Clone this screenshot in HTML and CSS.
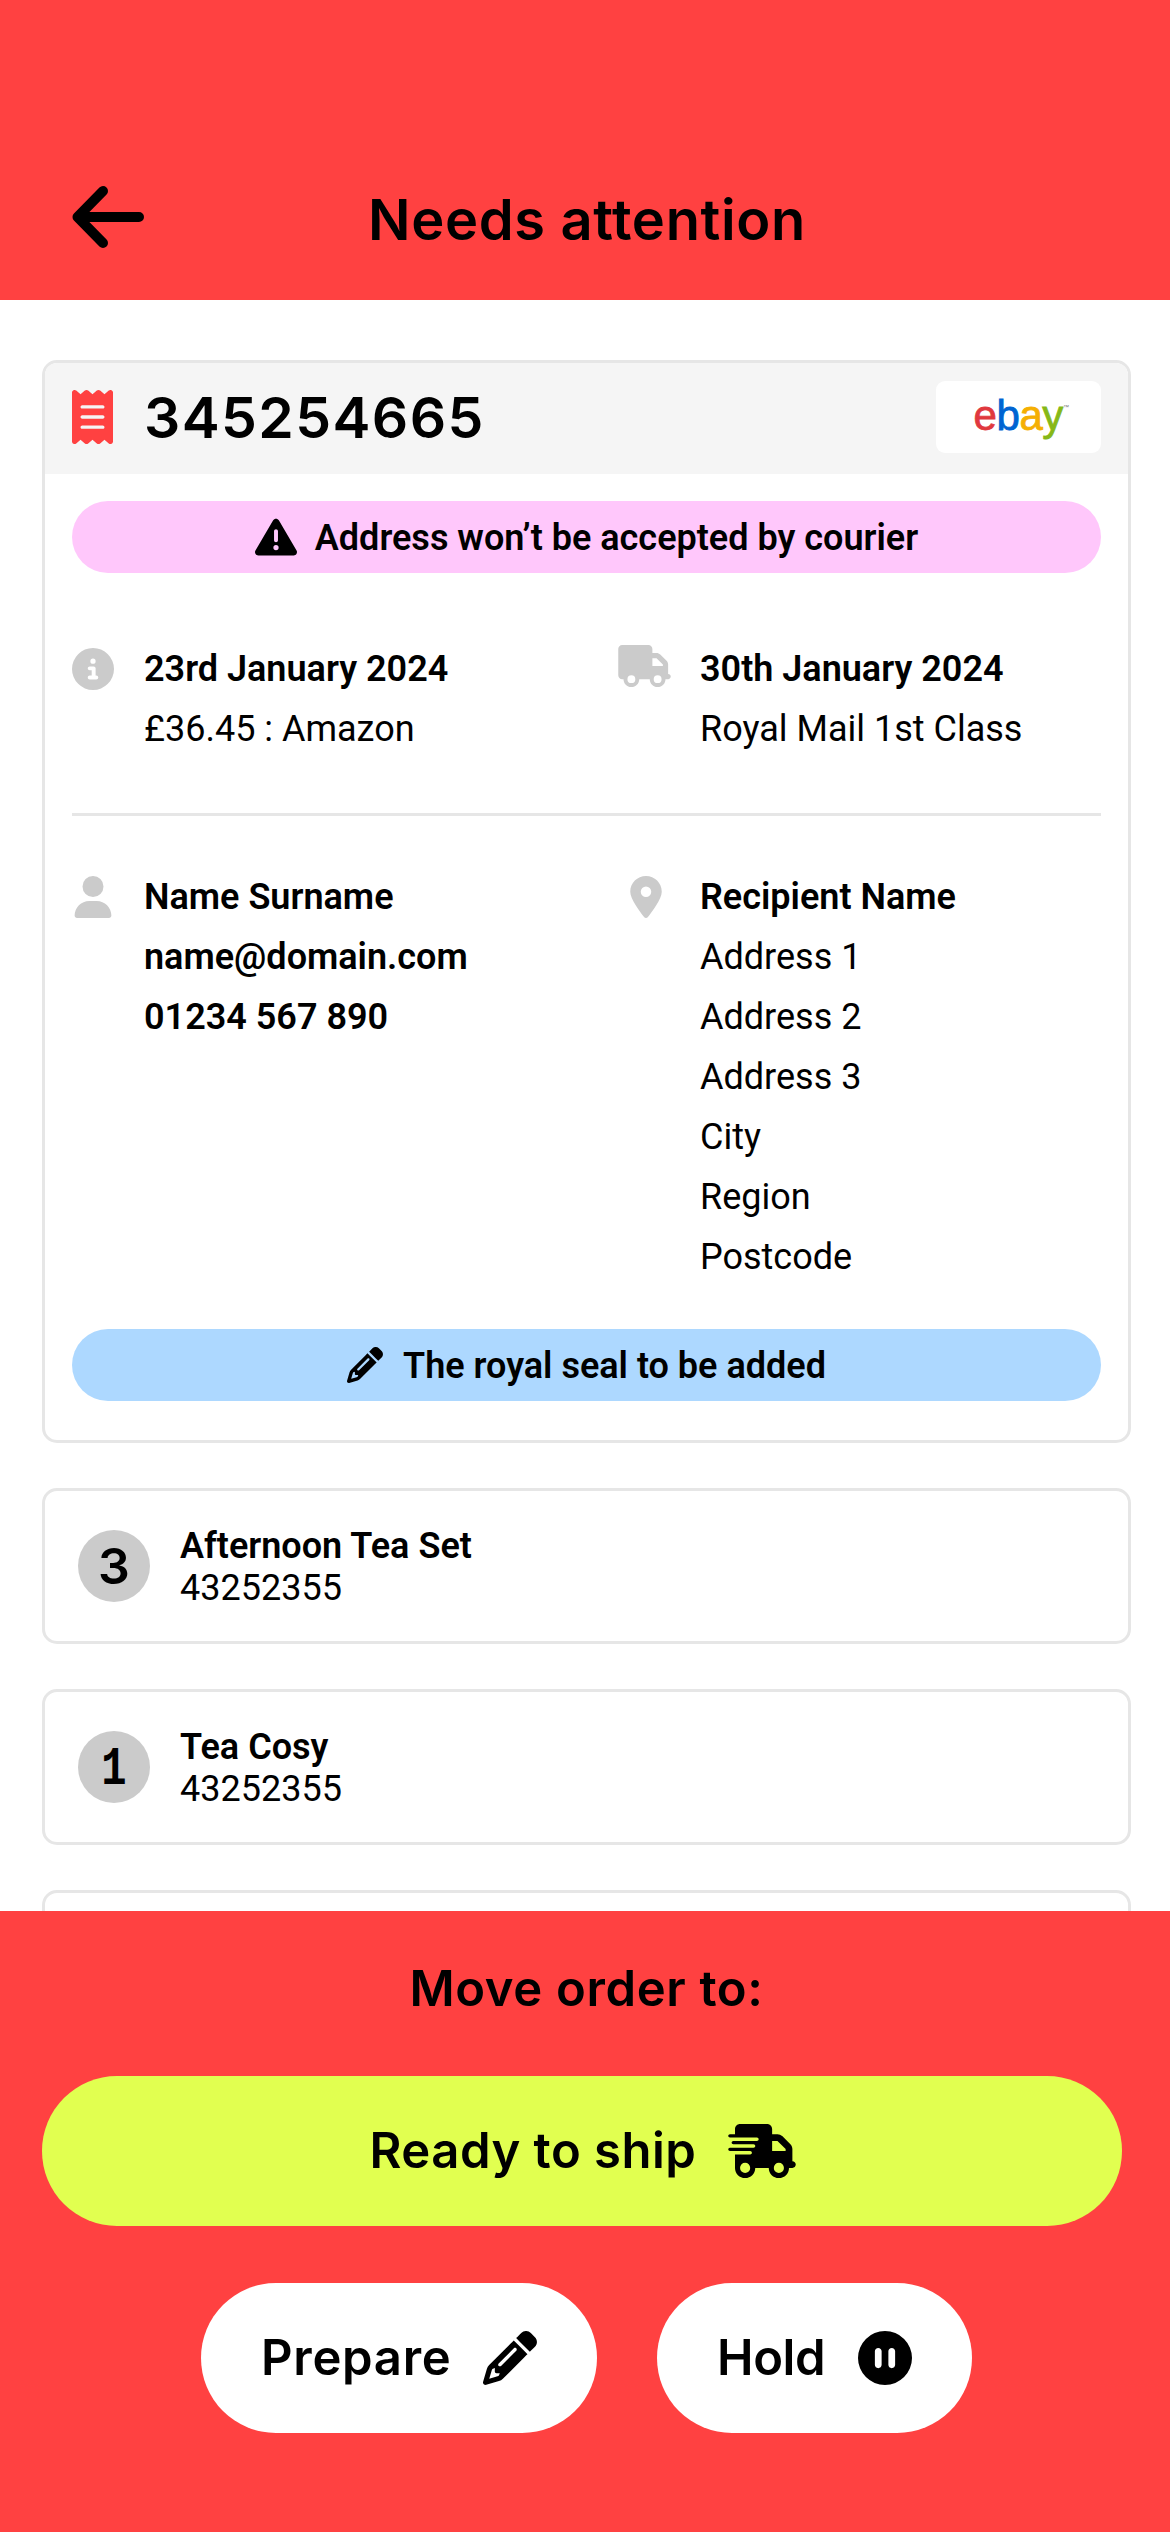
FILE: index.html
```html
<!DOCTYPE html>
<html lang="en">
<head>
<meta charset="utf-8">
<title>Needs attention</title>
<link rel="stylesheet" href="styles.css">
</head>
<body>
<svg class="defs" aria-hidden="true">
  <symbol id="pencil" viewBox="0 0 512 512"><path d="M410.300 231l11.300-11.300-33.900-33.900-62.100-62.100L291.700 89.800l-11.300 11.300-22.600 22.600L58.600 322.900c-10.400 10.400-18 23.300-22.200 37.400L1 480.700c-2.500 8.400-.2 17.500 6.100 23.700s15.300 8.500 23.700 6.100l120.300-35.400c14.100-4.200 27-11.800 37.400-22.200L387.700 253.700 410.300 231zM160 399.400l-9.100 22.700c-4 3.100-8.500 5.400-13.300 6.900L59.400 452l23-78.100c1.400-4.900 3.800-9.400 6.900-13.300l22.700-9.100v32c0 8.800 7.200 16 16 16h32zM362.700 18.700L348.300 33.200 325.700 55.800 314.300 67.100l33.900 33.900 62.100 62.100 33.900 33.900 11.300-11.300 22.600-22.600 14.500-14.500c25-25 25-65.500 0-90.500L453.300 18.700c-25-25-65.500-25-90.500 0zm-47.400 168l-144 144c-6.200 6.200-16.400 6.200-22.600 0s-6.200-16.400 0-22.600l144-144c6.200-6.200 16.400-6.200 22.600 0s6.200 16.400 0 22.600z"/></symbol>
</svg>
<div class="screen">
  <header class="topbar">
    <svg class="back" viewBox="0 0 72 64"><path d="M67 32H6M31 6 5.500 32 31 58" fill="none" stroke="#000" stroke-width="10" stroke-linecap="round" stroke-linejoin="round"/></svg>
    <h1 class="title">Needs attention</h1>
  </header>

  <main class="content">
    <section class="order">
      <div class="order-head">
        <svg class="receipt" viewBox="0 0 384 512" preserveAspectRatio="none"><path d="M14 2.200C22.500-1.700 32.500-.3 39.600 5.800L80 40.400 120.400 5.800c9-7.700 22.300-7.700 31.200 0L192 40.400 232.400 5.800c9-7.700 22.300-7.700 31.200 0L304 40.400 344.400 5.800c7.100-6.100 17.100-7.500 25.600-3.600s14 12.400 14 21.800V488c0 9.400-5.500 17.900-14 21.800s-18.500 2.500-25.600-3.600L304 471.600l-40.400 34.600c-9 7.700-22.300 7.700-31.200 0L192 471.600l-40.400 34.600c-9 7.700-22.300 7.700-31.200 0L80 471.600 39.600 506.200c-7.100 6.100-17.100 7.500-25.600 3.600S0 497.400 0 488V24C0 14.600 5.500 6.100 14 2.200zM96 144c-8.800 0-16 7.200-16 16s7.200 16 16 16h192c8.800 0 16-7.200 16-16s-7.200-16-16-16H96zM80 352c0 8.800 7.200 16 16 16h192c8.800 0 16-7.200 16-16s-7.200-16-16-16H96c-8.800 0-16 7.200-16 16zM96 240c-8.800 0-16 7.200-16 16s7.200 16 16 16h192c8.800 0 16-7.200 16-16s-7.200-16-16-16H96z"/></svg>
        <h2 class="order-no">345254665</h2>
        <div class="market"><span class="e">e</span><span class="b">b</span><span class="a">a</span><span class="y">y</span><span class="tm">™</span></div>
      </div>
      <div class="banner pink">
        <svg class="warn" viewBox="0 0 512 512"><path d="M256 32c14.200 0 27.300 7.500 34.500 19.800l216 368c7.300 12.400 7.300 27.700.2 40.100S486.300 480 472 480H40c-14.300 0-27.600-7.700-34.700-20.100s-7-27.800.2-40.100l216-368C228.700 39.500 241.800 32 256 32zm0 128c-13.300 0-24 10.700-24 24v112c0 13.300 10.700 24 24 24s24-10.700 24-24V184c0-13.300-10.700-24-24-24zm32 224a32 32 0 1 0-64 0 32 32 0 1 0 64 0z"/></svg>
        <span class="note-text">Address won’t be accepted by courier</span>
      </div>
      <div class="grid first">
        <div class="cell">
          <svg class="ic" viewBox="0 0 512 512"><path d="M256 512A256 256 0 1 0 256 0a256 256 0 1 0 0 512zM216 336h24V272H216c-13.300 0-24-10.700-24-24s10.700-24 24-24h48c13.300 0 24 10.700 24 24v88h8c13.300 0 24 10.700 24 24s-10.700 24-24 24H216c-13.300 0-24-10.700-24-24s10.700-24 24-24zm40-208a32 32 0 1 1 0 64 32 32 0 1 1 0-64z"/></svg>
          <div><p class="strong">23rd January 2024</p><p>£36.45 : Amazon</p></div>
        </div>
        <div class="cell">
          <svg class="ic truck" viewBox="0 0 640 512"><path d="M48 0C21.500 0 0 21.500 0 48V368c0 26.500 21.500 48 48 48H64c0 53 43 96 96 96s96-43 96-96H384c0 53 43 96 96 96s96-43 96-96h32c17.700 0 32-14.300 32-32s-14.300-32-32-32V237.300c0-17-6.700-33.300-18.700-45.300L512 114.700c-12-12-28.300-18.700-45.300-18.700H416V48c0-26.500-21.500-48-48-48H48zM416 160h50.700L544 237.300V256H416V160zM112 416a48 48 0 1 1 96 0 48 48 0 1 1-96 0zm368-48a48 48 0 1 1 0 96 48 48 0 1 1 0-96z"/></svg>
          <div><p class="strong">30th January 2024</p><p>Royal Mail 1st Class</p></div>
        </div>
      </div>
      <div class="grid second">
        <div class="cell">
          <svg class="ic" viewBox="-32 0 512 512"><path d="M224 256A128 128 0 1 0 224 0a128 128 0 1 0 0 256zm-45.700 48C79.800 304 0 383.800 0 482.300 0 498.700 13.300 512 29.700 512H418.300c16.400 0 29.700-13.300 29.700-29.700C448 383.800 368.200 304 269.700 304H178.300z"/></svg>
          <div class="strong"><p>Name Surname</p><p>name@domain.com</p><p>01234 567 890</p></div>
        </div>
        <div class="cell">
          <svg class="ic pin" viewBox="0 0 384 512"><path d="M215.700 499.200C267 435 384 279.400 384 192 384 86 298 0 192 0S0 86 0 192c0 87.400 117 243 168.300 307.200 12.300 15.300 35.100 15.300 47.400 0zM192 128a64 64 0 1 1 0 128 64 64 0 1 1 0-128z"/></svg>
          <div><p class="strong">Recipient Name</p><p>Address 1</p><p>Address 2</p><p>Address 3</p><p>City</p><p>Region</p><p>Postcode</p></div>
        </div>
      </div>
      <div class="banner blue">
        <svg class="note" viewBox="0 0 512 512"><use href="#pencil"/></svg>
        <span class="note-text">The royal seal to be added</span>
      </div>
    </section>

    <section class="item"><span class="qty">3</span><div><p class="strong">Afternoon Tea Set</p><p>43252355</p></div></section>
    <section class="item"><span class="qty"><span class="one">1</span></span><div><p class="strong">Tea Cosy</p><p>43252355</p></div></section>
    <section class="item"></section>
  </main>

  <footer class="actions">
    <h3 class="move">Move order to:</h3>
    <button class="btn ready"><span>Ready to ship</span>
      <svg class="fast" viewBox="0 0 640 512"><path d="M112 0C85.500 0 64 21.500 64 48V96H16c-8.800 0-16 7.200-16 16s7.200 16 16 16H272c8.800 0 16 7.200 16 16s-7.200 16-16 16H48c-8.800 0-16 7.200-16 16s7.200 16 16 16H240c8.800 0 16 7.200 16 16s-7.200 16-16 16H16c-8.800 0-16 7.200-16 16s7.200 16 16 16H208c8.800 0 16 7.200 16 16s-7.200 16-16 16H64V416c0 53 43 96 96 96s96-43 96-96H384c0 53 43 96 96 96s96-43 96-96h32c17.700 0 32-14.300 32-32s-14.300-32-32-32V237.300c0-17-6.700-33.300-18.700-45.300L512 114.700c-12-12-28.300-18.700-45.300-18.700H416V48c0-26.500-21.500-48-48-48H112zM544 237.300V256H416V160h50.700L544 237.300zM160 368a48 48 0 1 1 0 96 48 48 0 1 1 0-96zm272 48a48 48 0 1 1 96 0 48 48 0 1 1-96 0z"/></svg>
    </button>
    <div class="pair">
      <button class="btn prepare"><span>Prepare</span><svg class="sq" viewBox="0 0 512 512"><use href="#pencil"/></svg></button>
      <button class="btn hold"><span>Hold</span><svg class="sq" viewBox="0 0 512 512"><path d="M256 512A256 256 0 1 0 256 0a256 256 0 1 0 0 512zM224 192V320c0 17.700-14.300 32-32 32s-32-14.300-32-32V192c0-17.700 14.300-32 32-32s32 14.300 32 32zm128 0V320c0 17.700-14.300 32-32 32s-32-14.300-32-32V192c0-17.700 14.300-32 32-32s32 14.300 32 32z"/></svg></button>
    </div>
  </footer>
</div>
</body>
</html>
```
FILE: styles.css
```css
* { box-sizing: border-box; margin: 0; padding: 0; }
body { background: #fff; color: #000; font: 400 36px/60px Roboto, "Liberation Sans", sans-serif; }
svg { display: block; flex: none; }
.defs { display: none; }
.screen { width: 1170px; height: 2532px; display: flex; flex-direction: column; overflow: hidden; }
.strong { font-weight: 600; }

.topbar { flex: none; height: 300px; background: #ff4141; display: grid; grid-template-columns: 72px 1fr 72px; align-items: center; padding: 134px 72px 0; }
.back { width: 72px; height: 64px; }
.title { font: 600 56px/72px Inter, sans-serif; letter-spacing: 0.65px; text-align: center; white-space: nowrap; padding: 5px 0 0 4px; }

.content { flex: 1; min-height: 0; overflow: hidden; padding: 60px 39px 0 42px; display: flex; flex-direction: column; gap: 45px; }
.order { flex: none; height: 1083px; border: 3px solid #e6e6e6; border-radius: 15px; overflow: hidden; }
.order-head { height: 111px; background: #f5f5f5; display: flex; align-items: center; padding: 0 27px 3px; }
.receipt { width: 41px; height: 54px; fill: #ff4141; }
.order-no { margin-left: 31px; padding-top: 2px; font: 600 57px/72px Inter, sans-serif; letter-spacing: 1.4px; }
.market { margin-left: auto; width: 165px; height: 72px; border-radius: 9px; background: #fff; display: flex; justify-content: center; padding-left: 5px; font: 400 42px/69px "Liberation Sans", sans-serif; letter-spacing: -0.4px; -webkit-text-stroke: 0.8px; }
.e { color: #e0383e; } .b { color: #0064d2; } .a { color: #f5af02; } .y { color: #86b817; }
.tm { font-size: 6px; line-height: 52px; color: #777; -webkit-text-stroke: 0; }

.banner { height: 72px; margin: 0 27px; border-radius: 36px; display: flex; align-items: center; justify-content: center; font-weight: 600; white-space: nowrap; }
.pink { background: #ffc7fb; margin-top: 27px; gap: 18px; }
.blue { background: #add8ff; gap: 20px; }
.note-text { padding-top: 2px; }
.warn { width: 42px; height: 42px; }
.note { width: 36px; height: 36px; }
.grid { margin: 0 27px; display: grid; grid-template-columns: 546px 1fr; }
.first { padding: 66px 0 54px; border-bottom: 3px solid #e6e6e6; }
.second { padding: 51px 0 42px; }
.cell { display: grid; grid-template-columns: 42px 1fr; column-gap: 30px; white-space: nowrap; }
.cell + .cell { grid-template-columns: 53px 1fr; column-gap: 29px; }
.ic { width: 42px; height: 42px; margin-top: 9px; fill: #cbcbcb; }
.truck { width: 53px; margin-top: 6px; }
.pin { width: 32px; margin-left: 12px; }

.item { flex: none; height: 156px; border: 3px solid #e6e6e6; border-radius: 15px; display: flex; align-items: center; gap: 30px; padding: 2px 33px 0; line-height: 42px; }
.qty { width: 72px; height: 72px; border-radius: 50%; background: #cbcbcb; text-align: center; font: 600 50px/72px Inter, sans-serif; margin-top: -2px; }
.one { display: block; font: 700 54px/78px "Liberation Mono", monospace; transform: scaleX(0.78); }

.actions { flex: none; height: 621px; background: #ff4141; padding: 50px 48px 99px 42px; display: flex; flex-direction: column; align-items: center; }
.move { font: 600 49px/56px Inter, sans-serif; letter-spacing: 0.65px; margin-bottom: 59px; padding-left: 9px; }
.btn { border: 0; height: 150px; border-radius: 75px; background: #fff; color: #000; font: 600 49px/60px Inter, sans-serif; display: flex; align-items: center; justify-content: space-between; padding: 0 60px 0 60px; white-space: nowrap; }
.ready { width: 1080px; background: #e1ff50; justify-content: center; gap: 32px; letter-spacing: 0.5px; padding-left: 62px; }
.pair { margin: 57px 0 0 9px; display: flex; gap: 60px; }
.prepare { width: 396px; letter-spacing: 0.7px; }
.hold { width: 315px; letter-spacing: -0.4px; }
.fast { width: 68px; height: 54px; }
.sq { width: 54px; height: 54px; }
```
